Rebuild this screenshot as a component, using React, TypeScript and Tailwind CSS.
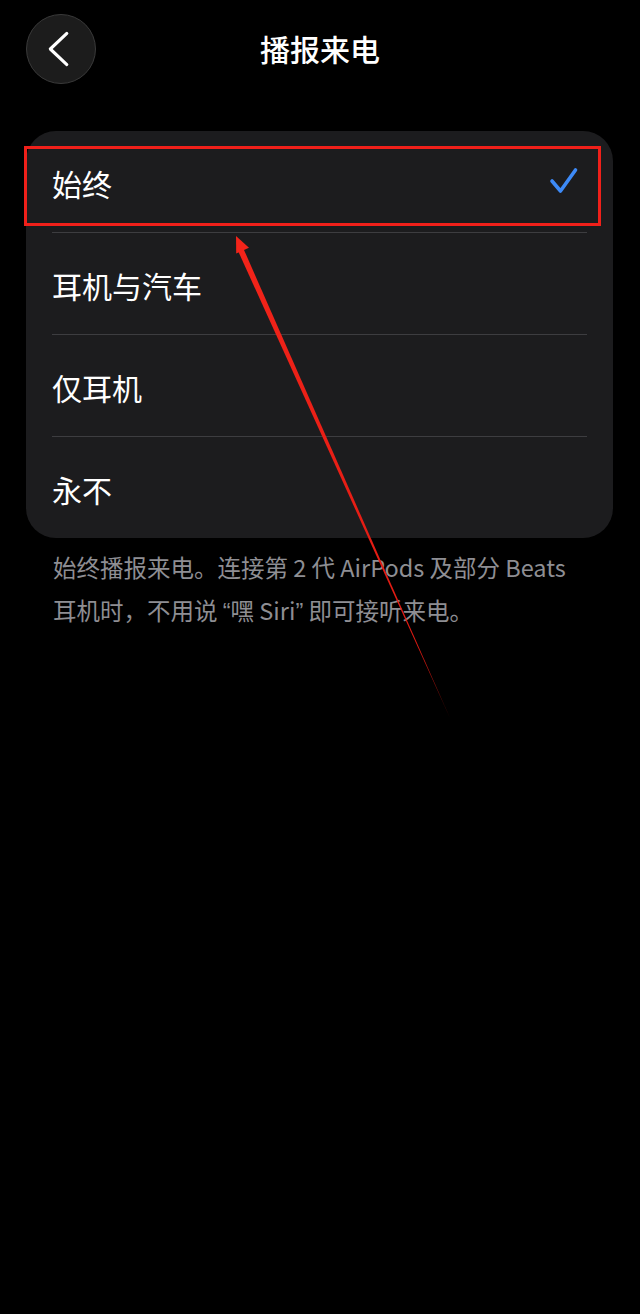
import React from "react";

const font = { fontFamily: '"Noto Sans CJK SC", "Noto Sans", sans-serif' };

function Row({ label, checked, last }: { label: string; checked?: boolean; last?: boolean }) {
  return (
    <div className="flex flex-col">
      <div className="flex h-[101px] items-center justify-between pl-[26px] pr-[33px]">
        <span className="text-[30px] leading-none text-white pt-[3px]">{label}</span>
        {checked && (
          <svg width="32" height="30" viewBox="0 0 32 30" fill="none">
            <path d="M4 14 L12.5 24 L27.5 3" stroke="#3d8af7" strokeWidth="3.6" strokeLinecap="round" strokeLinejoin="round" />
          </svg>
        )}
      </div>
      {!last && <div className="mx-[26px] h-px bg-[#3d3d40]" />}
    </div>
  );
}

const q = { fontFamily: '"Liberation Sans", sans-serif' };

export default function App() {
  return (
    <div className="relative min-h-[1314px] w-[640px] bg-black overflow-hidden" style={font}>
      <div className="relative flex h-[100px] items-start pt-[14px] pl-[26px]">
        <div className="flex h-[70px] w-[70px] items-center justify-center rounded-full border border-[#3a3a3a] bg-[#1c1c1c]">
          <svg width="70" height="70" viewBox="0 0 70 70" fill="none">
            <path d="M41 19 L24 35 L41 51" stroke="white" strokeWidth="3.2" strokeLinecap="round" strokeLinejoin="round" />
          </svg>
        </div>
        <div className="absolute left-0 right-0 top-[33px] text-center text-[30px] font-medium leading-none text-white">
          播报来电
        </div>
      </div>

      <div className="mx-[26px] mt-[31px] w-[587px] rounded-[30px] bg-[#1c1c1e]">
        <Row label="始终" checked />
        <Row label="耳机与汽车" />
        <Row label="仅耳机" />
        <Row label="永不" last />
      </div>

      <p className="mt-[8px] pl-[53px] pr-[10px] text-[23.5px] leading-[43px] text-[#8e8e93]">
        始终播报来电。连接第 2 代 AirPods 及部分 Beats
        <br />
        耳机时，不用说 <span style={q}>“</span>嘿 Siri<span style={q}>”</span> 即可接听来电。
      </p>

      <div className="pointer-events-none absolute left-[24px] top-[146px] h-[80px] w-[577px] border-[3px] border-[#f0201a]" />

      <svg className="pointer-events-none absolute left-0 top-0" width="640" height="1314" viewBox="0 0 640 1314">
        <defs>
          <linearGradient id="g" x1="240" y1="248" x2="450" y2="718" gradientUnits="userSpaceOnUse">
            <stop offset="0" stopColor="#f3241a" />
            <stop offset="0.85" stopColor="#e01a12" />
            <stop offset="1" stopColor="#6a0a06" />
          </linearGradient>
        </defs>
        <polygon points="237.4,249.5 242.8,247.2 450,718" fill="url(#g)" />
        <polygon points="236,236 249,247.7 236.2,253.5" fill="#f3241a" />
      </svg>
    </div>
  );
}
